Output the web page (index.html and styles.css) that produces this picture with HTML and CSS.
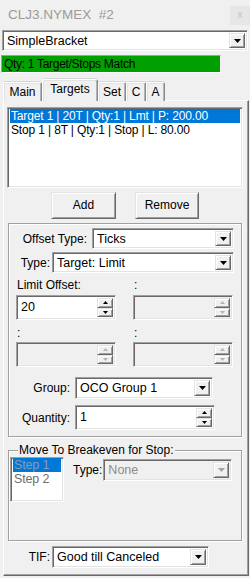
FILE: index.html
```html
<!DOCTYPE html>
<html>
<head>
<meta charset="utf-8">
<link rel="stylesheet" href="styles.css">
</head>
<body>
<div class="window">
  <div class="titlebar">
    <span class="title">CLJ3.NYMEX  #2</span>
    <span class="close">x</span>
  </div>

  <div class="combo main-combo">
    <span class="val">SimpleBracket</span>
    <span class="drop"><svg width="7" height="4" viewBox="0 0 7 4"><path d="M0 0h7L3.5 4z"/></svg></span>
  </div>

  <div class="status">Qty: 1 Target/Stops Match</div>

  <div class="tabs">
    <div class="tab t-main">Main</div>
    <div class="tab sel t-targets">Targets</div>
    <div class="tab t-set">Set</div>
    <div class="tab t-c">C</div>
    <div class="tab t-a">A</div>
  </div>

  <div class="panel">
    <div class="listbox orders">
      <div class="row selected">Target 1 | 20T | Qty:1 | Lmt | P: 200.00</div>
      <div class="row">Stop 1 | 8T | Qty:1 | Stop | L: 80.00</div>
    </div>

    <div class="btnrow">
      <div class="btn add">Add</div>
      <div class="btn remove">Remove</div>
    </div>

    <div class="group g1">
      <div class="frow r-offset">
        <span class="lbl">Offset Type:</span>
        <div class="combo c-offset">
          <span class="val">Ticks</span>
          <span class="drop"><svg width="7" height="4" viewBox="0 0 7 4"><path d="M0 0h7L3.5 4z"/></svg></span>
        </div>
      </div>
      <div class="frow r-type">
        <span class="lbl">Type:</span>
        <div class="combo c-type">
          <span class="val">Target: Limit</span>
          <span class="drop"><svg width="7" height="4" viewBox="0 0 7 4"><path d="M0 0h7L3.5 4z"/></svg></span>
        </div>
      </div>

      <div class="grid2">
        <div class="cell">
          <div class="caption">Limit Offset:</div>
          <div class="spin">
            <span class="val">20</span>
            <span class="arrows">
              <span class="sbtn"><svg width="5" height="3" viewBox="0 0 5 3"><path d="M0 3h5L2.5 0z"/></svg></span>
              <span class="sbtn"><svg width="5" height="3" viewBox="0 0 5 3"><path d="M0 0h5L2.5 3z"/></svg></span>
            </span>
          </div>
        </div>
        <div class="cell">
          <div class="caption">:</div>
          <div class="spin disabled">
            <span class="val"></span>
            <span class="arrows">
              <span class="sbtn"><svg width="5" height="3" viewBox="0 0 5 3"><path d="M0 3h5L2.5 0z"/></svg></span>
              <span class="sbtn"><svg width="5" height="3" viewBox="0 0 5 3"><path d="M0 0h5L2.5 3z"/></svg></span>
            </span>
          </div>
        </div>
        <div class="cell">
          <div class="caption cap2">:</div>
          <div class="spin disabled sp2">
            <span class="val"></span>
            <span class="arrows">
              <span class="sbtn"><svg width="5" height="3" viewBox="0 0 5 3"><path d="M0 3h5L2.5 0z"/></svg></span>
              <span class="sbtn"><svg width="5" height="3" viewBox="0 0 5 3"><path d="M0 0h5L2.5 3z"/></svg></span>
            </span>
          </div>
        </div>
        <div class="cell">
          <div class="caption cap2">:</div>
          <div class="spin disabled sp2">
            <span class="val"></span>
            <span class="arrows">
              <span class="sbtn"><svg width="5" height="3" viewBox="0 0 5 3"><path d="M0 3h5L2.5 0z"/></svg></span>
              <span class="sbtn"><svg width="5" height="3" viewBox="0 0 5 3"><path d="M0 0h5L2.5 3z"/></svg></span>
            </span>
          </div>
        </div>
      </div>

      <div class="frow r-group">
        <span class="lbl">Group:</span>
        <div class="combo c-group">
          <span class="val">OCO Group 1</span>
          <span class="drop"><svg width="7" height="4" viewBox="0 0 7 4"><path d="M0 0h7L3.5 4z"/></svg></span>
        </div>
      </div>
      <div class="frow r-qty">
        <span class="lbl">Quantity:</span>
        <div class="spin s-qty">
          <span class="val">1</span>
          <span class="arrows">
            <span class="sbtn"><svg width="5" height="3" viewBox="0 0 5 3"><path d="M0 3h5L2.5 0z"/></svg></span>
            <span class="sbtn"><svg width="5" height="3" viewBox="0 0 5 3"><path d="M0 0h5L2.5 3z"/></svg></span>
          </span>
        </div>
      </div>
    </div>

    <div class="group g2">
      <div class="legend-line"><span class="legend">Move To Breakeven for Stop:</span></div>
      <div class="g2body">
        <div class="listbox steps">
          <div class="row selected">Step 1</div>
          <div class="row">Step 2</div>
        </div>
        <span class="lbl be-lbl">Type:</span>
        <div class="combo disabled c-be">
          <span class="val">None</span>
          <span class="drop"><svg width="7" height="4" viewBox="0 0 7 4"><path d="M0 0h7L3.5 4z"/></svg></span>
        </div>
      </div>
    </div>

    <div class="frow r-tif">
      <span class="lbl">TIF:</span>
      <div class="combo c-tif">
        <span class="val">Good till Canceled</span>
        <span class="drop"><svg width="7" height="4" viewBox="0 0 7 4"><path d="M0 0h7L3.5 4z"/></svg></span>
      </div>
    </div>
  </div>
</div>
</body>
</html>
```

FILE: styles.css
```css
* { box-sizing: border-box; }

html, body {
  margin: 0;
  padding: 0;
  background: #f0f0f0;
}

body {
  width: 250px;
  height: 578px;
  overflow: hidden;
  font-family: "Liberation Sans", Arial, sans-serif;
  font-size: 12px;
  color: #000;
}

.window {
  width: 250px;
  height: 578px;
}

/* title bar */
.titlebar {
  height: 30px;
  display: flex;
  justify-content: space-between;
  align-items: flex-start;
}
.title {
  white-space: pre;
  color: #9a9a9a;
  font-size: 13.5px;
  line-height: 16px;
  padding: 7px 0 0 8px;
}
.close {
  width: 20px;
  height: 19px;
  margin-top: 6px;
  background: #e6e6e6;
  color: #c4c4c4;
  font-size: 10px;
  line-height: 17px;
  text-align: center;
}

/* sunken field */
.combo, .spin, .listbox {
  background: #fff;
  border: 1px solid;
  border-color: #a0a0a0 #fff #fff #a0a0a0;
  box-shadow: inset 1px 1px 0 #696969, inset -1px -1px 0 #e3e3e3;
}

.combo {
  display: flex;
  align-items: stretch;
  height: 21px;
  padding: 2px;
}
.combo .val, .spin .val {
  flex: 1;
  padding-left: 2px;
  line-height: 17px;
  white-space: nowrap;
  overflow: hidden;
}
.combo .drop {
  width: 16px;
  display: flex;
  align-items: center;
  justify-content: center;
  background: #f0f0f0;
  border: 1px solid;
  border-color: #e3e3e3 #696969 #696969 #e3e3e3;
  box-shadow: inset 1px 1px 0 #fff, inset -1px -1px 0 #a0a0a0;
}
.combo .drop svg, .sbtn svg { display: block; fill: #000; }

.combo.disabled { background: #f0f0f0; }
.combo.disabled .val { color: #8d8d8d; }
.combo.disabled .drop svg { fill: #a0a0a0; }

.main-combo {
  width: 246px;
  margin-left: 2px;
  font-size: 12.5px;
}

/* status strip */
.status {
  width: 220px;
  height: 18px;
  margin: 4px 0 0 1px;
  background: #00a000;
  border: 1px solid;
  border-color: #a0a0a0 #fff #fff #a0a0a0;
  padding-left: 2px;
  line-height: 16px;
  font-size: 12px;
  letter-spacing: -0.3px;
  white-space: nowrap;
}

/* tabs */
.tabs {
  display: flex;
  align-items: flex-end;
  height: 22px;
  margin: 6px 0 0 3px;
}
.tab {
  height: 19px;
  text-align: center;
  font-size: 12px;
  line-height: 18px;
  background: #f0f0f0;
  border-left: 1px solid #fff;
  border-top: 1px solid #fff;
  border-right: 1px solid #8a8a8a;
  box-shadow: inset -1px 0 0 #b4b4b4, inset 1px 1px 0 #e3e3e3, 0 -1px 0 #d6d6d6;
  border-radius: 2px 2px 0 0;
}
.tab.sel {
  height: 22px;
  position: relative;
  z-index: 1;
  line-height: 19px;
}
.t-main { width: 39px; }
.t-targets { width: 56px; }
.t-set { width: 28px; }
.t-c { width: 20px; }
.t-a { width: 19px; }

/* panel */
.panel {
  width: 246px;
  height: 476px;
  margin: -1px 0 0 3px;
  border: 1px solid;
  border-color: #fff #696969 #696969 #fff;
  box-shadow: inset -1px -1px 0 #a0a0a0;
}

.listbox { padding: 1px 2px 0 2px; }
.row {
  height: 14px;
  line-height: 14px;
  padding-left: 1px;
  white-space: nowrap;
  font-size: 12px;
  letter-spacing: -0.15px;
}
.row.selected { background: #0078d7; color: #fff; }

.orders {
  width: 236px;
  height: 81px;
  margin: 6px 0 0 3px;
}

/* buttons */
.btnrow {
  display: flex;
  margin: 4px 0 0 47px;
}
.btn {
  height: 27px;
  line-height: 25px;
  text-align: center;
  font-size: 12px;
  background: #f0f0f0;
  border: 1px solid;
  border-color: #e3e3e3 #696969 #696969 #e3e3e3;
  box-shadow: inset 1px 1px 0 #fff, inset -1px -1px 0 #a0a0a0;
}
.add { width: 65px; }
.remove { width: 64px; margin-left: 19px; }

/* group boxes */
.group {
  width: 234px;
  margin-left: 4px;
  border: 1px solid #a0a0a0;
  box-shadow: inset 1px 1px 0 #fff, 1px 1px 0 #fff;
}
.g1 {
  height: 214px;
  margin-top: 4px;
}

.frow {
  display: flex;
  align-items: center;
}
.lbl {
  text-align: right;
  white-space: nowrap;
}

.r-offset { margin-top: 4px; }
.r-offset .lbl { width: 78px; margin-right: 5px; }
.c-offset { width: 142px; font-size: 12.5px; }

.r-type { margin-top: 3px; }
.r-type .lbl { width: 41px; margin-right: 2px; }
.c-type { width: 182px; font-size: 12.5px; }

.grid2 {
  display: grid;
  grid-template-columns: 100px 100px;
  column-gap: 17px;
  margin: 5px 0 0 7px;
}
.caption {
  height: 14px;
  line-height: 14px;
  padding-left: 1px;
}
.cap2 { margin-top: 6px; }

.spin {
  display: flex;
  height: 25px;
  margin-top: 3px;
  padding: 2px;
  font-size: 12.5px;
}
.spin .val { line-height: 19px; }
.sp2 { margin-top: 2px; }
.spin.disabled { background: #f0f0f0; }
.arrows {
  width: 16px;
  display: flex;
  flex-direction: column;
}
.sbtn {
  flex: 1;
  display: flex;
  align-items: center;
  justify-content: center;
  background: #f0f0f0;
  border: 1px solid;
  border-color: #e3e3e3 #696969 #696969 #e3e3e3;
  box-shadow: inset 1px 1px 0 #fff, inset -1px -1px 0 #a0a0a0;
}
.spin.disabled .sbtn svg { fill: #b4b4b4; }

.r-group { margin-top: 10px; }
.r-group .lbl { width: 61px; margin-right: 5px; }
.c-group { width: 138px; height: 22px; font-size: 12.5px; }

.r-qty { margin-top: 6px; }
.r-qty .lbl { width: 61px; margin-right: 5px; }
.s-qty { width: 140px; margin-top: 0; }

.g2 {
  height: 91px;
  margin-top: 13px;
}
.legend-line {
  height: 14px;
  margin-top: -8px;
  line-height: 14px;
  padding-left: 9px;
}
.legend {
  background: #f0f0f0;
  padding: 0 1px;
}
.g2body {
  display: flex;
  align-items: flex-start;
}
.steps {
  width: 54px;
  height: 45px;
  margin-left: 1px;
  padding-top: 0;
}
.steps .row { color: #6d6d6d; font-size: 12.5px; }
.steps .row.selected { color: #8a9bb0; }
.be-lbl { margin-left: 9px; margin-top: 6px; }
.c-be {
  width: 129px;
  height: 22px;
  margin: 2px 0 0 1px;
  font-size: 12.5px;
}

.r-tif { margin-top: 5px; }
.r-tif .lbl { width: 46px; margin-right: 2px; }
.c-tif { width: 157px; height: 22px; font-size: 12.5px; }
```
